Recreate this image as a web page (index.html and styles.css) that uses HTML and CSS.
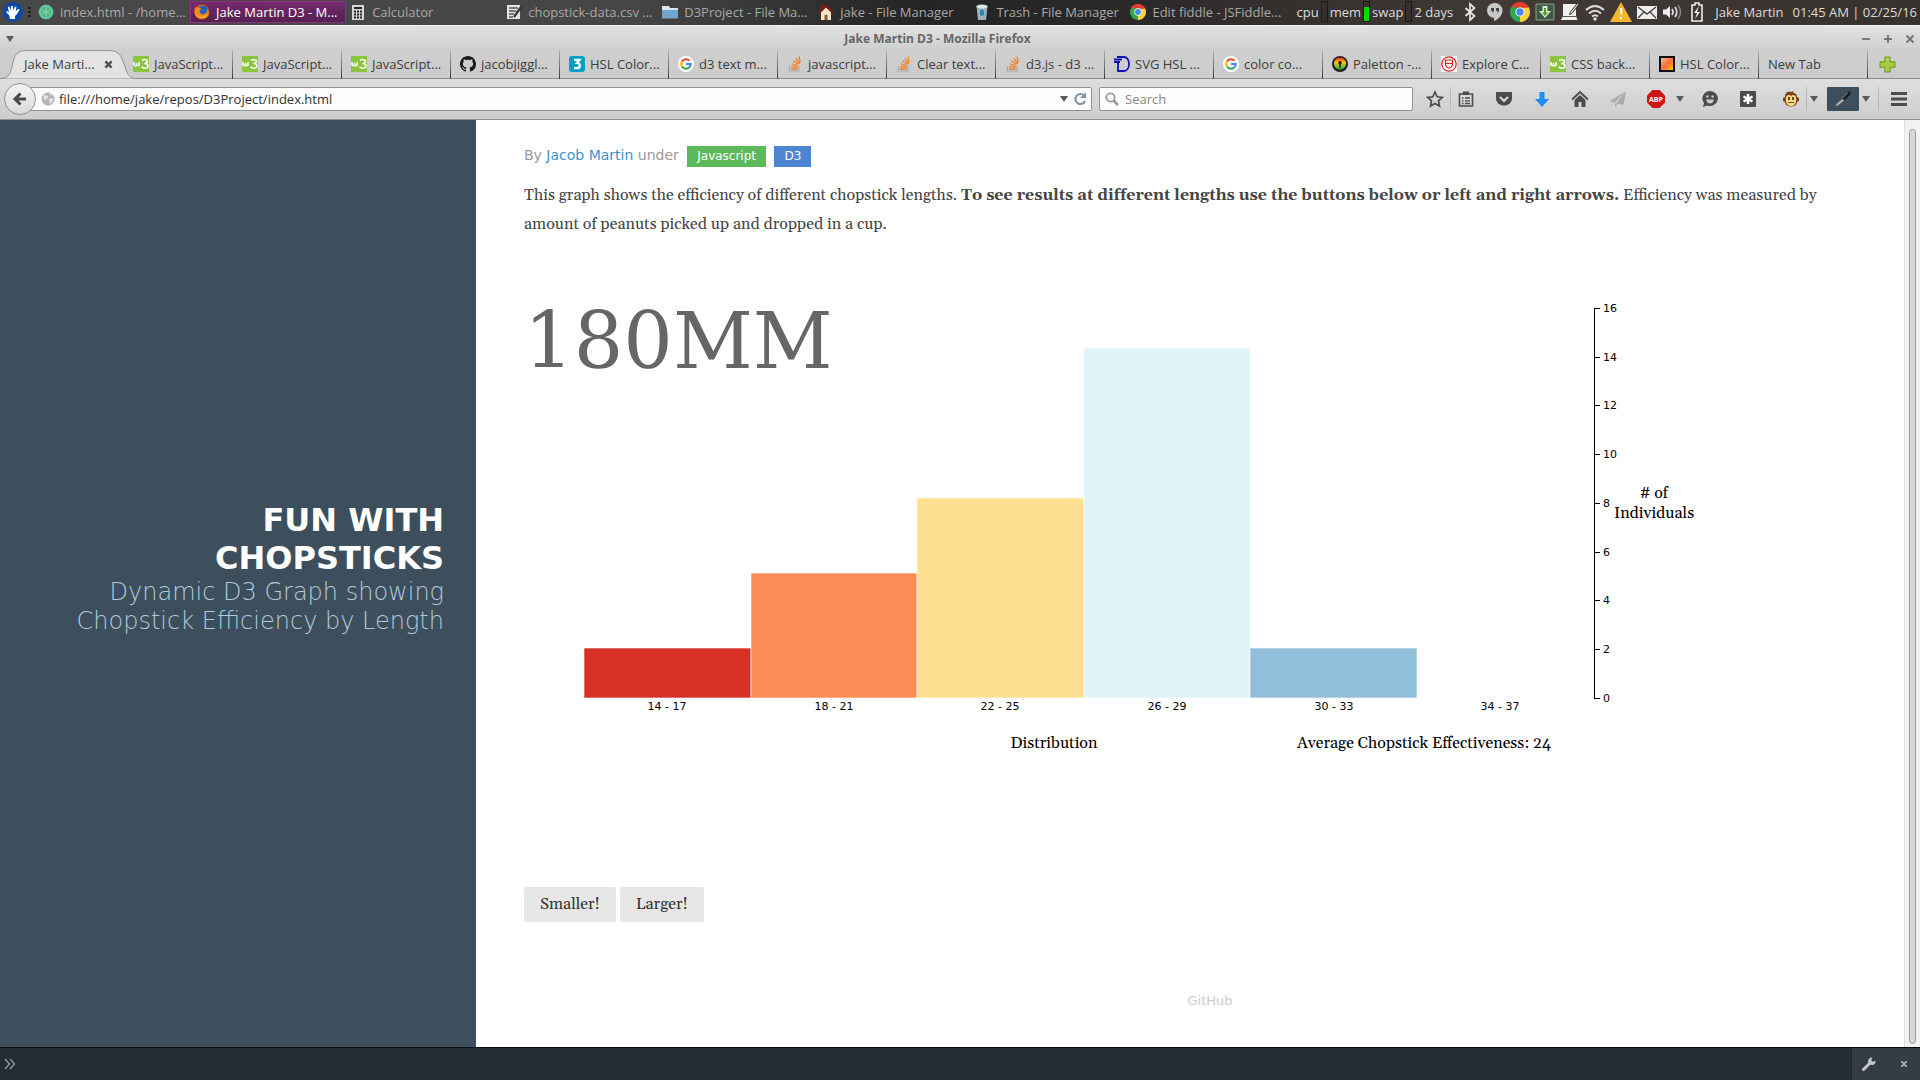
FILE: index.html
```html
<!DOCTYPE html>
<html lang="en">
<head>
<meta charset="utf-8">
<title>Jake Martin D3</title>
<link rel="stylesheet" href="styles.css">
</head>
<body>
<svg class="defs" aria-hidden="true">
  <defs>
    <linearGradient id="hsl" x1="0" y1="0" x2="1" y2="1"><stop offset="0" stop-color="#fbd0a0"/><stop offset=".5" stop-color="#ff6a3a"/><stop offset="1" stop-color="#ffd400"/></linearGradient>
    <linearGradient id="rainbow" x1="0" y1="0" x2="0" y2="1"><stop offset="0" stop-color="#e22"/><stop offset=".4" stop-color="#fc0"/><stop offset="1" stop-color="#2b4"/></linearGradient>
  </defs>
  <symbol id="w3" viewBox="0 0 16 16"><rect width="16" height="16" fill="#8bc53f"/><path d="M1 6v3q1.500 1.500 2.500 0V7v2q1.500 1.500 2.500 0V6M9 4.500c2-1.500 5.500-1 5.500.8 0 1.500-1.500 2-3 2.200 2 0 3.500 1 3.500 2.500 0 2.500-4.500 3-6.500.8" fill="none" stroke="#fff" stroke-width="1.500"/></symbol>
  <symbol id="google" viewBox="0 0 16 16"><circle cx="8" cy="8" r="8" fill="#fff"/><g fill="none" stroke-width="2.200"><path d="M11.400 4.700A4.700 4.700 0 0 0 4 5.500" stroke="#ea4335"/><path d="M4 5.500a4.700 4.700 0 0 0 0 5" stroke="#fbbc05"/><path d="M4 10.500a4.700 4.700 0 0 0 7.200 1" stroke="#34a853"/><path d="M11.200 11.500A4.700 4.700 0 0 0 12.700 8H8" stroke="#4285f4"/></g></symbol>
  <symbol id="so" viewBox="0 0 16 16"><path d="M2.500 10v5h9.500v-5" fill="none" stroke="#aaa" stroke-width="1.200"/><path d="M4 13h6.500M4.200 10.500l6.400.8M5 7.800l6 2M6.500 4.800l5.200 3.600M9 2.500l3.700 5M12 .5l1.200 6" stroke="#f48024" stroke-width="1.300"/></symbol>
  <symbol id="chrome" viewBox="0 0 20 20"><path d="M10 10L1.340 5A10 10 0 0 1 18.660 5z" fill="#e33b2e"/><path d="M10 10L18.660 5A10 10 0 0 1 10 20z" fill="#fdd23a"/><path d="M10 10v10A10 10 0 0 1 1.340 5z" fill="#2da94f"/><path d="M10 5.500h9L14 12z" fill="#fdd23a"/><path d="M1.500 5L10 5.500 6 12z" fill="#2da94f"/><path d="M1.340 5A10 10 0 0 1 18.660 5.500H10z" fill="#e33b2e"/><circle cx="10" cy="10" r="4.600" fill="#fff"/><circle cx="10" cy="10" r="3.700" fill="#4a8af4"/></symbol>
  <symbol id="caret" viewBox="0 0 8 8"><path d="M0 1h8L4 7z" fill="#5b5b5b"/></symbol>
</svg>

<header class="panel">
  <button class="menu-start" aria-label="Applications"><svg viewBox="0 0 20 20"><circle cx="10" cy="10" r="10" fill="#0c49a6"/><path d="M7 17l-1-4-3-3 1-1 2 1.500L4.800 5l1.500-.5L8 8.500 8.200 4h1.500l.7 4.500L12 4.500l1.400.4-.6 4.400 2.500-2.500 1.200 1-2.500 4.200-2 2V17z" fill="#fff"/></svg></button>
  <span class="grip"></span>
  <nav class="tasks">
    <button class="task"><svg viewBox="0 0 16 16"><circle cx="8" cy="8" r="7.500" fill="#4db583"/><circle cx="8" cy="8" r="6" fill="none" stroke="#8fd3b0"/><path d="M4 6l8 4M4 10l8-4M8 3.500v9" stroke="#8fd3b0" fill="none"/></svg>index.html - /home...</button>
    <button class="task active"><svg viewBox="0 0 16 16"><circle cx="8" cy="8" r="7.500" fill="#e66000"/><circle cx="9" cy="7" r="5.500" fill="#2a62b3"/><path d="M1 3l2 1c2-1 4 0 4 1.500L5.500 7c0 3 3.500 4 6 2.500 1.500-1 2-3 1.500-5 2.500 3 2 7-1 9-4 2.500-9 1-11-3C.3 8 .2 5.500 1 3z" fill="#f08a1c"/><path d="M2 11c3 3 8 3 11 0" stroke="#ffcb3c" fill="none"/></svg>Jake Martin D3 - M...</button>
    <button class="task"><svg viewBox="0 0 16 16"><rect x="2" y="1" width="12" height="15" fill="#d8d8d8"/><path d="M4 3h8v2H4z" fill="#222"/><path d="M4 7.500h8M4 10.500h8M4 13.500h8" stroke="#222" stroke-width="2" stroke-dasharray="2 1"/></svg>Calculator</button>
    <button class="task"><svg viewBox="0 0 16 16"><path d="M1 1h13v14H1z" fill="#e4e4e4"/><path d="M3 4h9M3 7h7M3 10h5M3 13h4" stroke="#555" stroke-width="1.500"/><path d="M15 3l-7 10" stroke="#333" stroke-width="2.200"/></svg>chopstick-data.csv ...</button>
    <button class="task"><svg viewBox="0 0 16 16"><path d="M0 2h7l1 2h8v10H0z" fill="#dbe7f0"/><path d="M0 6h16v8.500H0z" fill="#74a5cc"/></svg>D3Project - File Ma...</button>
    <button class="task"><svg viewBox="0 0 16 16"><path d="M3 8l5-5 5 5v8H3z" fill="#f5e6c8"/><path d="M1 9l7-7 7 7" stroke="#7a2014" stroke-width="2" fill="none"/><path d="M3 1h2.500v4L3 7z" fill="#7a2014"/><path d="M6.500 16v-4.500q1.500-2 3 0V16z" fill="#8b5a2b"/></svg>jake - File Manager</button>
    <button class="task"><svg viewBox="0 0 16 16"><path d="M2.500 2h11L12 16H4z" fill="#9eb0bb"/><ellipse cx="8" cy="2.500" rx="5.500" ry="2" fill="#dde6ea"/><path d="M6 7l2-2 2 2v4l-2 1-2-1z" fill="#2b82b8"/></svg>Trash - File Manager</button>
    <button class="task"><svg><use href="#chrome"/></svg>Edit fiddle - JSFiddle...</button>
  </nav>
  <div class="monitors">
    <span>cpu</span><i class="gauge"></i><span>mem</span><i class="gauge full"></i><span>swap</span><i class="gauge"></i><span>2 days</span>
  </div>
  <div class="tray">
    <svg viewBox="0 0 20 20"><path d="M5.500 6l9 8-4.500 4V2l4.500 4-9 8" fill="none" stroke="#e8e8e8" stroke-width="1.700"/></svg>
    <svg viewBox="0 0 20 20"><path d="M10 1a7.500 7.500 0 0 0-1 15v3c5-2 8.500-6 8.500-10.500A7.500 7.500 0 0 0 10 1z" fill="#c8c8c8"/><path d="M6 6h3v3l-1.500 2.500V9H6zM11 6h3v3l-1.500 2.500V9H11z" fill="#444"/></svg>
    <svg><use href="#chrome"/></svg>
    <svg viewBox="0 0 20 20"><path d="M1 2h18v16H1z" fill="#3c5a48" stroke="#8aa08f"/><path d="M7.500 4h5v5H16l-6 7-6-7h3.500z" fill="#dfe8c8"/><path d="M10 6v5" stroke="#4d9b33" stroke-width="2"/><path d="M7 10.500h6L10 14z" fill="#4d9b33"/></svg>
    <svg viewBox="0 0 20 20"><path d="M3 2h13v12l1.500 4H1L3 14z" fill="#f0f0f0"/><path d="M3 14.500h14" stroke="#555"/><path d="M17.500 1l-7 9-1 2.500 2.500-1 6.500-9z" fill="#f0f0f0" stroke="#333"/></svg>
    <svg viewBox="0 0 20 20"><path d="M1 8q9-8 18 0M4 11.500q6-5.500 12 0M7 14.500q3-2.500 6 0" fill="none" stroke="#ddd" stroke-width="2"/><circle cx="10" cy="17" r="1.700" fill="#ddd"/></svg>
    <svg class="wide" viewBox="0 0 22 20"><path d="M11 0l11 20H0z" fill="#f5b62e"/><path d="M10 6h2.400l-.5 7h-1.400zM10 15h2v2.200h-2z" fill="#fff"/></svg>
    <svg viewBox="0 0 20 20"><path d="M0 4h20v13H0z" fill="#eee"/><path d="M1 5l9 7 9-7M1 16l6-6M19 16l-6-6" fill="none" stroke="#444" stroke-width="1.400"/></svg>
    <svg viewBox="0 0 20 20"><path d="M1 7.500h3L8 4v12l-4-3.500H1z" fill="#eee"/><path d="M10 7q2 3 0 6M13 5q3.500 5 0 10" fill="none" stroke="#ddd" stroke-width="1.800"/><path d="M16 3q5 7 0 14" fill="none" stroke="#888" stroke-width="1.500"/></svg>
    <svg viewBox="0 0 20 20"><path d="M8 1h4v2h3v16H5V3h3z" fill="none" stroke="#eee" stroke-width="1.600"/><path d="M12 4l-5 7h3l-2 6 5-7h-3z" fill="#eee"/></svg>
  </div>
  <span class="user">Jake Martin</span>
  <time class="clock">01:45 AM | 02/25/16</time>
</header>

<div class="titlebar">
  <svg class="caret"><use href="#caret"/></svg>
  <strong>Jake Martin D3 - Mozilla Firefox</strong>
  <div class="window-buttons">
    <button aria-label="Minimize"><svg viewBox="0 0 10 10"><path d="M1 5h8"/></svg></button>
    <button aria-label="Maximize"><svg viewBox="0 0 10 10"><path d="M1 5h8M5 1v8"/></svg></button>
    <button aria-label="Close"><svg viewBox="0 0 10 10"><path d="M1.500 1.500l7 7M8.500 1.500l-7 7"/></svg></button>
  </div>
</div>

<nav class="tabs">
  <button class="tab selected"><svg class="tab-shape" viewBox="0 0 137 29" preserveAspectRatio="none"><path d="M0 28.500C8 28.500 10 25 12 17S14 .5 26 .5H109C121 .500 122 9 125 17S129 28.500 137 28.500V29H0z"/></svg><span>Jake Marti...</span><svg class="tab-close" viewBox="0 0 10 10"><path d="M1.500 1.500l7 7M8.500 1.500l-7 7"/></svg></button>
  <button class="tab"><svg><use href="#w3"/></svg>JavaScript...</button>
  <button class="tab"><svg><use href="#w3"/></svg>JavaScript...</button>
  <button class="tab"><svg><use href="#w3"/></svg>JavaScript...</button>
  <button class="tab"><svg viewBox="0 0 16 16"><path d="M8 0C3.580 0 0 3.580 0 8c0 3.540 2.290 6.530 5.470 7.590.4.070.550-.170.550-.380 0-.190-.010-.820-.010-1.490-2.010.370-2.530-.490-2.690-.940-.090-.230-.480-.940-.820-1.130-.280-.150-.680-.520-.010-.530.630-.010 1.080.580 1.230.820.720 1.210 1.870.870 2.330.660.070-.520.280-.870.510-1.070-1.780-.200-3.640-.890-3.640-3.950 0-.870.310-1.590.820-2.150-.080-.200-.360-1.020.080-2.120 0 0 .670-.210 2.200.820.640-.180 1.320-.270 2-.270s1.360.090 2 .270c1.530-1.040 2.200-.820 2.200-.820.440 1.100.160 1.920.080 2.120.510.560.820 1.270.820 2.150 0 3.070-1.870 3.750-3.650 3.950.290.250.540.730.540 1.480 0 1.070-.010 1.930-.010 2.200 0 .210.150.460.550.380A8.010 8.010 0 0 0 16 8c0-4.420-3.580-8-8-8z" fill="#1a1a1a"/></svg>jacobjiggl...</button>
  <button class="tab"><svg viewBox="0 0 16 16"><rect width="16" height="16" rx="3" fill="#05a0c6"/><path d="M5 3.800h5.500L8 7c4 0 4 5.200-.5 5.200H5" fill="none" stroke="#fff" stroke-width="2.200"/></svg>HSL Color...</button>
  <button class="tab"><svg><use href="#google"/></svg>d3 text m...</button>
  <button class="tab"><svg><use href="#so"/></svg>javascript...</button>
  <button class="tab"><svg><use href="#so"/></svg>Clear text...</button>
  <button class="tab"><svg><use href="#so"/></svg>d3.js - d3 ...</button>
  <button class="tab"><svg viewBox="0 0 16 16"><path d="M4 7v8h6c3 0 5-3 5-7s-2-7-5-7H3M0 3.500h8M0 6h6" fill="none" stroke="#11b" stroke-width="1.800"/></svg>SVG HSL ...</button>
  <button class="tab"><svg><use href="#google"/></svg>color co...</button>
  <button class="tab"><svg viewBox="0 0 16 16"><circle cx="8" cy="8" r="8" fill="#222"/><circle cx="8" cy="7.500" r="6" fill="url(#rainbow)"/><path d="M8 5a1.800 1.800 0 0 1 1 3.300l-.4 3.700H7.400L7 8.300A1.800 1.800 0 0 1 8 5z" fill="#222"/></svg>Paletton -...</button>
  <button class="tab"><svg viewBox="0 0 16 16"><path d="M0 0h16v16H0z" fill="#fff"/><g fill="none" stroke="#e21b1b" stroke-width="1.200"><circle cx="8" cy="8" r="7.200"/><path d="M4.500 4h7v4.500q-.5 3-3.500 3.500-3-.5-3.500-3.500zM4.500 7.500h7"/></g></svg>Explore C...</button>
  <button class="tab"><svg><use href="#w3"/></svg>CSS back...</button>
  <button class="tab"><svg viewBox="0 0 16 16"><path d="M1 1h14v14H1z" fill="url(#hsl)" stroke="#111" stroke-width="2"/></svg>HSL Color...</button>
  <button class="tab">New Tab</button>
  <button class="new-tab" aria-label="Open a new tab"><svg viewBox="0 0 16 16"><path d="M5.500 1h5v4.500H15v5h-4.500V15h-5v-4.500H1v-5h4.500z" fill="#a4cf45" stroke="#6f9a22" stroke-linejoin="round"/></svg></button>
</nav>

<div class="toolbar">
  <button class="back" aria-label="Back"><svg viewBox="0 0 16 16"><path d="M14 8H4M8.500 2.500L3 8l5.500 5.500" fill="none" stroke="#4a4a4a" stroke-width="3"/></svg></button>
  <div class="field url">
    <svg viewBox="0 0 14 14"><circle cx="7" cy="7" r="6.500" fill="#b5b5b5"/><path d="M3 3l4 1-1 3-3 1zM8 7l4-1-1 4-2 2zM8 1l3 1-1 2z" fill="#e9e9e9"/></svg>
    <input aria-label="Address" value="file:///home/jake/repos/D3Project/index.html">
    <svg class="caret"><use href="#caret"/></svg>
    <svg viewBox="0 0 14 14"><path d="M12 9A5 5 0 1 1 11 3.500" fill="none" stroke="#8291a1" stroke-width="2"/><path d="M13 0v6H7z" fill="#8291a1"/></svg>
  </div>
  <div class="field search">
    <svg viewBox="0 0 14 14"><circle cx="5.500" cy="5.500" r="4.200" fill="none" stroke="#999" stroke-width="1.800"/><path d="M8.500 8.500L13 13" stroke="#999" stroke-width="2.500"/></svg>
    <input aria-label="Search" placeholder="Search">
  </div>
  <div class="tools">
    <button aria-label="Bookmark"><svg viewBox="0 0 18 18"><path d="M9 2l2.200 4.800 5.100.600-3.800 3.500 1 5.100L9 13.500 4.500 16l1-5.100L1.700 7.400l5.100-.600z" fill="none" stroke="#4c4c4c" stroke-width="1.700"/></svg></button>
    <i class="rule"></i>
    <button class="push" aria-label="Bookmarks list"><svg viewBox="0 0 18 18"><path d="M2.500 4h13v12h-13z" fill="none" stroke="#4c4c4c" stroke-width="1.600"/><path d="M6 1.500h6V5H6z" fill="#4c4c4c"/><path d="M5 8h1.500M8 8h5M5 10.800h1.500M8 10.800h5M5 13.500h1.500M8 13.500h5" stroke="#4c4c4c" stroke-width="1.300"/></svg></button>
    <button class="push" aria-label="Pocket"><svg viewBox="0 0 18 18"><path d="M1 2h16v6c0 10-16 10-16 0z" fill="#4c4c4c"/><path d="M5 7l4 4 4-4" fill="none" stroke="#ddd" stroke-width="2"/></svg></button>
    <button class="push" aria-label="Downloads"><svg viewBox="0 0 18 18"><path d="M6.500 2h5v7H16l-7 8-7-8h4.500z" fill="#1e8df5"/></svg></button>
    <button class="push" aria-label="Home"><svg viewBox="0 0 18 18"><path d="M1 9.500l8-7.500 8 7.500" fill="none" stroke="#4c4c4c" stroke-width="2"/><path d="M3.500 10L9 5l5.500 5v7h-4v-5h-3v5h-4z" fill="#4c4c4c"/></svg></button>
    <button class="push" aria-label="Send"><svg viewBox="0 0 18 18"><path d="M17 1L1 11l4 2zM17 1L7 13.500 14.500 15zM6 13.500V17l2.500-2.500z" fill="#aaa"/></svg></button>
    <button class="push" aria-label="Adblock Plus"><svg viewBox="0 0 18 18"><path d="M5.500 0h7L18 5.500v7L12.500 18h-7L0 12.500v-7z" fill="#d01414"/><text x="9" y="12" text-anchor="middle" class="abp">ABP</text></svg></button>
    <svg class="caret next"><use href="#caret"/></svg>
    <button class="push" aria-label="Chat"><svg viewBox="0 0 18 18"><path d="M9 1a8 7.500 0 1 1-3 14.500L2 17l1-4A8 7.500 0 0 1 9 1z" fill="#4c4c4c"/><path d="M5 9.500h8q-1 4-4 4t-4-4z" fill="#ccc"/><circle cx="6.500" cy="6.500" r="1.200" fill="#ccc"/><circle cx="11.500" cy="6.500" r="1.200" fill="#ccc"/></svg></button>
    <button class="push" aria-label="Add-on"><svg viewBox="0 0 18 18"><rect x="1" y="1" width="16" height="16" rx="1" fill="#4c4c4c"/><path d="M9 4v10M4.500 6.500l9 5M13.500 6.500l-9 5" stroke="#fff" stroke-width="2.500"/></svg></button>
    <button class="push wide-gap" aria-label="Monkey scripts"><svg viewBox="0 0 18 18"><path d="M3 7C3 2 6 1 9 2l3-1-1 2c3 0 4 2 4 4l2 1v3l-2 1c0 6-12 6-12 0l-2-1V8z" fill="#7a431a"/><path d="M4 7.500c1-3 4-3 5-1 1-2 4-2 5 1 2 11.500-12 11.500-10 0z" fill="#fbd685"/><path d="M7 7v3M11 7v3" stroke="#222" stroke-width="1.500"/><path d="M6 12.500h6" stroke="#7a4a1a"/></svg></button>
    <i class="rule"></i>
    <svg class="caret"><use href="#caret"/></svg>
    <button class="picker" aria-label="Color picker"><svg viewBox="0 0 18 18"><path d="M1.500 16.500l1.500-3 6-5 1.500 1.500-6 5z" fill="#b5b5b5"/><path d="M8 8l5-5q3-2 3.500-.5T15 6l-5 4.500z" fill="#1b1b1b"/><path d="M8.500 8l5-5" stroke="#999"/></svg></button>
    <svg class="caret"><use href="#caret"/></svg>
    <i class="rule last"></i>
    <button aria-label="Menu"><svg viewBox="0 0 18 18"><path d="M1 3.500h16M1 9h16M1 14.500h16" stroke="#4c4c4c" stroke-width="3"/></svg></button>
  </div>
</div>

<div class="viewport">
  <div class="page">
    <aside class="sidebar">
      <h1>Fun with Chopsticks</h1>
      <h2>Dynamic D3 Graph showing Chopstick Efficiency by Length</h2>
    </aside>
    <main class="content">
      <p class="byline">By <a href="#author">Jacob Martin</a> under <a class="tag green" href="#javascript">Javascript</a> <a class="tag blue" href="#d3">D3</a></p>
      <p class="intro">This graph shows the efficiency of different chopstick lengths. <strong>To see results at different lengths use the buttons below or left and right arrows.</strong> Efficiency was measured by amount of peanuts picked up and dropped in a cup.</p>
      <svg class="chart" viewBox="0 0 1200 560" role="img" aria-label="Chopstick efficiency at 180MM">
        <text class="length" x="0" y="100">180MM</text>
        <g class="bars">
          <rect x="60" y="380" width="167" height="50" fill="#d73027"/>
          <rect x="227" y="305" width="166" height="125" fill="#fc8d59"/>
          <rect x="393" y="230" width="167" height="200" fill="#fee090"/>
          <rect x="560" y="80" width="166" height="350" fill="#e0f3f8"/>
          <rect x="726" y="380" width="167" height="50" fill="#91bfdb"/>
        </g>
        <g class="ticks middle">
          <text x="143" y="442">14 - 17</text><text x="310" y="442">18 - 21</text><text x="476" y="442">22 - 25</text><text x="643" y="442">26 - 29</text><text x="810" y="442">30 - 33</text><text x="976" y="442">34 - 37</text>
        </g>
        <path class="axis" d="M1076 40h-6v390h6M1070 89h6M1070 137h6M1070 186h6M1070 235h6M1070 284h6M1070 332h6M1070 381h6"/>
        <g class="ticks">
          <text x="1079" y="44">16</text><text x="1079" y="93">14</text><text x="1079" y="141">12</text><text x="1079" y="190">10</text><text x="1079" y="239">8</text><text x="1079" y="288">6</text><text x="1079" y="336">4</text><text x="1079" y="385">2</text><text x="1079" y="434">0</text>
        </g>
        <g class="captions">
          <text x="1130" y="230"># of</text><text x="1130" y="250">Individuals</text><text x="530" y="480">Distribution</text><text x="900" y="480">Average Chopstick Effectiveness: 24</text>
        </g>
      </svg>
      <div class="actions"><button>Smaller!</button><button>Larger!</button></div>
      <footer><a href="#github">GitHub</a></footer>
    </main>
  </div>
  <div class="scrollbar"><span></span></div>
</div>

<div class="console">
  <svg viewBox="0 0 12 12"><path d="M1 1l4.500 5L1 11M6 1l4.500 5L6 11" fill="none" stroke="#8d9399" stroke-width="1.500"/></svg>
  <div class="console-tools">
    <button aria-label="Developer tools"><svg viewBox="0 0 14 14"><path d="M1.500 12.500L8 6" stroke="#c5c9cd" stroke-width="3" stroke-linecap="round"/><path d="M10.500.5L9 3l2 2 2.500-1.500c.5 3-1.500 5-4 4.500L6 5C6 2 8 0 10.500.500z" fill="#c5c9cd"/></svg></button>
    <button aria-label="Close"><svg class="small" viewBox="0 0 10 10"><path d="M1.500 1.500l7 7M8.500 1.500l-7 7" stroke="#a9aeb3" stroke-width="2.200"/></svg></button>
  </div>
</div>
</body>
</html>
```
FILE: styles.css
```css
* { box-sizing: border-box; }
body {
  margin: 0;
  min-height: 100vh;
  display: flex;
  flex-direction: column;
  font: 13px/18px "Open Sans", "Noto Sans", sans-serif;
  color: #3c3c3c;
  background: #fff;
}
button { border: 0; padding: 0; background: none; font: inherit; color: inherit; }
svg { display: block; flex: none; }
.defs { position: absolute; width: 0; height: 0; }
.caret { width: 8px; height: 8px; }

/* Desktop panel */
.panel {
  display: flex;
  align-items: center;
  height: 25px;
  padding: 0 3px 2px;
  color: #dcdcdc;
  background: linear-gradient(90deg, #494949 0, #464646 33%, #242424 48%, #2c2a29 60%, #413a36 78%, #38322f 100%);
  white-space: nowrap;
}
.menu-start svg { width: 20px; height: 20px; }
.grip { width: 3px; height: 10px; margin: 0 3px 0 5px; background: repeating-linear-gradient(#222 0 2px, transparent 2px 4px); }
.tasks { flex: 1; display: grid; grid-template-columns: repeat(8, 1fr); }
.task { display: flex; align-items: center; gap: 6px; height: 22px; padding-left: 4px; color: #a9a9a9; }
.task svg { width: 16px; height: 16px; }
.task.active { color: #fff; background: linear-gradient(#782a70, #55204f); box-shadow: inset 0 0 0 1px #8b3382; }
.monitors { display: flex; align-items: center; gap: 2px; margin-left: 14px; }
.gauge { width: 7px; height: 21px; border: 1px solid #1c1a19; background: #35312f; }
.gauge.full { background: linear-gradient(#35312f 25%, #0d0 25%); }
.tray { display: flex; align-items: center; gap: 5px; margin: 0 8px 0 7px; }
.tray svg { width: 20px; height: 20px; }
.tray .wide { width: 22px; }
.clock { margin-left: 9px; }

/* Window title */
.titlebar {
  display: flex;
  align-items: center;
  justify-content: space-between;
  height: 25px;
  padding: 2px 5px 0 6px;
  border-top: 1px solid #f4f4f4;
  background: linear-gradient(#e1e1e1, #cfcfcf);
  color: #666;
  font-size: 12px;
}
.titlebar strong { flex: 1; text-align: center; }
.window-buttons { display: flex; gap: 12px; }
.window-buttons svg { width: 10px; height: 10px; stroke: #777; stroke-width: 2; fill: none; }

/* Tab strip */
.tabs {
  display: grid;
  grid-template-columns: repeat(17, minmax(0, 1fr)) 52px;
  height: 29px;
  padding-left: 15px;
  background: linear-gradient(#cfcfcf, #cbcbcb);
  box-shadow: inset 0 -1px #8c8c8c;
}
.tab {
  display: flex;
  align-items: center;
  gap: 5px;
  padding: 0 0 1px 9px;
  border-right: 1px solid;
  border-image: linear-gradient(#bbb, #333) 1;
  white-space: nowrap;
}
.tab svg { width: 16px; height: 16px; }
.tab.selected { position: relative; border-color: transparent; border-image: none; justify-content: space-between; padding-right: 10px; }
.tab.selected span { position: relative; }
.tab.selected .tab-shape { position: absolute; left: -15px; top: 0; width: 137px; height: 29px; fill: #e3e3e3; stroke: #8d969e; }
.tab.selected .tab-close { position: relative; width: 9px; height: 9px; stroke: #4d4d4d; stroke-width: 2.500; }
.new-tab { padding-left: 11px; }
.new-tab svg { width: 17px; height: 17px; }

/* Navigation toolbar */
.toolbar {
  display: flex;
  align-items: center;
  height: 41px;
  padding: 0 12px 0 4px;
  border-bottom: 1px solid #8f8f8f;
  background: linear-gradient(#dedede, #cdcdcd);
}
.back {
  position: relative;
  display: grid;
  place-items: center;
  width: 32px;
  height: 32px;
  margin-right: -16px;
  border: 1px solid #8e949b;
  border-radius: 50%;
  background: linear-gradient(#f4f4f4, #d9d9d9);
}
.back svg { width: 16px; height: 16px; }
.field {
  display: flex;
  align-items: center;
  height: 24px;
  border: 1px solid #919191;
  border-radius: 2px;
  background: #fcfcfc;
}
.field svg { width: 14px; height: 14px; }
.field .caret { width: 8px; height: 8px; margin-right: 5px; }
.field input { flex: 1; min-width: 0; border: 0; padding: 0 4px; background: none; font: inherit; color: #333; }
.field input::placeholder { color: #888; opacity: 1; }
.url { flex: 1; padding: 0 4px 0 20px; }
.search { width: 314px; margin-left: 7px; padding-left: 5px; }
.search input { padding-left: 6px; }
.tools { display: flex; align-items: center; margin-left: 13px; }
.tools svg { width: 18px; height: 18px; }
.tools .caret { width: 8px; height: 8px; margin: 0 3px; }
.tools .next { margin: 0 -3px 0 11px; }
.rule { width: 1px; height: 24px; margin-left: 6px; background: #b5b9bf; }
.push { margin-left: 20px; }
.rule + .push { margin-left: 6px; }
.push.wide-gap { margin-left: 25px; }
.picker { display: grid; place-items: center; width: 32px; height: 24px; margin-left: 6px; border-radius: 1px; background: #3d4f5d; }
.tools .rule.last { margin: 0 11px 0 5px; }
.abp { font: bold 7px "Open Sans", sans-serif; fill: #fff; }

/* Web page */
.viewport { flex: 1; display: flex; }
.page { flex: 1; min-width: 0; display: flex; }
.sidebar {
  flex: 0 0 25%;
  padding: 381px 32px 0;
  background: #3d4f5d;
  color: #fff;
  text-align: right;
  font-family: "DejaVu Sans", sans-serif;
}
.sidebar h1 { margin: 0 0 1px; font-size: 32px; line-height: 38px; text-transform: uppercase; }
.sidebar h2 { margin: 0; font-size: 24px; line-height: 29px; font-weight: 200; color: #b0cadb; }
.content { flex: 1; min-width: 0; padding: 20px 48px 0; font: 16px/29px Georgia, Gelasio, "Liberation Serif", serif; }
.byline { margin: 0 0 11px; font: 14px/30px "DejaVu Sans", sans-serif; color: #999; }
.byline a { color: #3d92c9; text-decoration: none; }
.byline .tag { display: inline-block; margin-left: 4px; padding: 0 10px; font-size: 12px; line-height: 21px; color: #fff; }
.byline .green { background: #5aba59; }
.byline .blue { background: #4d85d1; }
.intro { margin: 0 0 29px; color: #444; }
.chart { width: 1200px; max-width: 100%; height: auto; }
.length { font: 78px "DejaVu Serif", serif; fill: #666; }
.bars { stroke: #fff; stroke-opacity: .6; }
.ticks { font: 11px "DejaVu Sans", sans-serif; }
.middle, .captions { text-anchor: middle; }
.captions { font-size: 16px; }
.axis { fill: none; stroke: #000; shape-rendering: crispEdges; }
.actions { display: flex; gap: 4px; margin-top: 59px; }
.actions button { height: 35px; padding: 0 16px; border-radius: 2px; background: #e6e6e6; color: #333; }
footer { margin-top: 64px; padding-left: 40px; text-align: center; font: 13px/29px "DejaVu Sans", sans-serif; }
footer a { color: #ccc; text-decoration: none; }
.scrollbar { width: 16px; padding: 9px 4px 3px; border-left: 1px solid #ddd; background: #f2f2f2; display: flex; }
.scrollbar span { flex: 1; border: 1px solid #999; border-radius: 4px; background: #d8d8d8; }

/* Developer bar */
.console { display: flex; align-items: stretch; justify-content: space-between; height: 33px; padding-left: 4px; border-top: 1px solid #0a0d10; background: #252c33; }
.console > svg { width: 12px; height: 12px; align-self: center; }
.console-tools { display: flex; align-items: center; gap: 24px; padding: 0 12px 0 10px; background: #343c45; border-left: 1px solid #1c2126; }
.console-tools svg { width: 14px; height: 14px; }
.console-tools .small { width: 8px; height: 8px; }
```
